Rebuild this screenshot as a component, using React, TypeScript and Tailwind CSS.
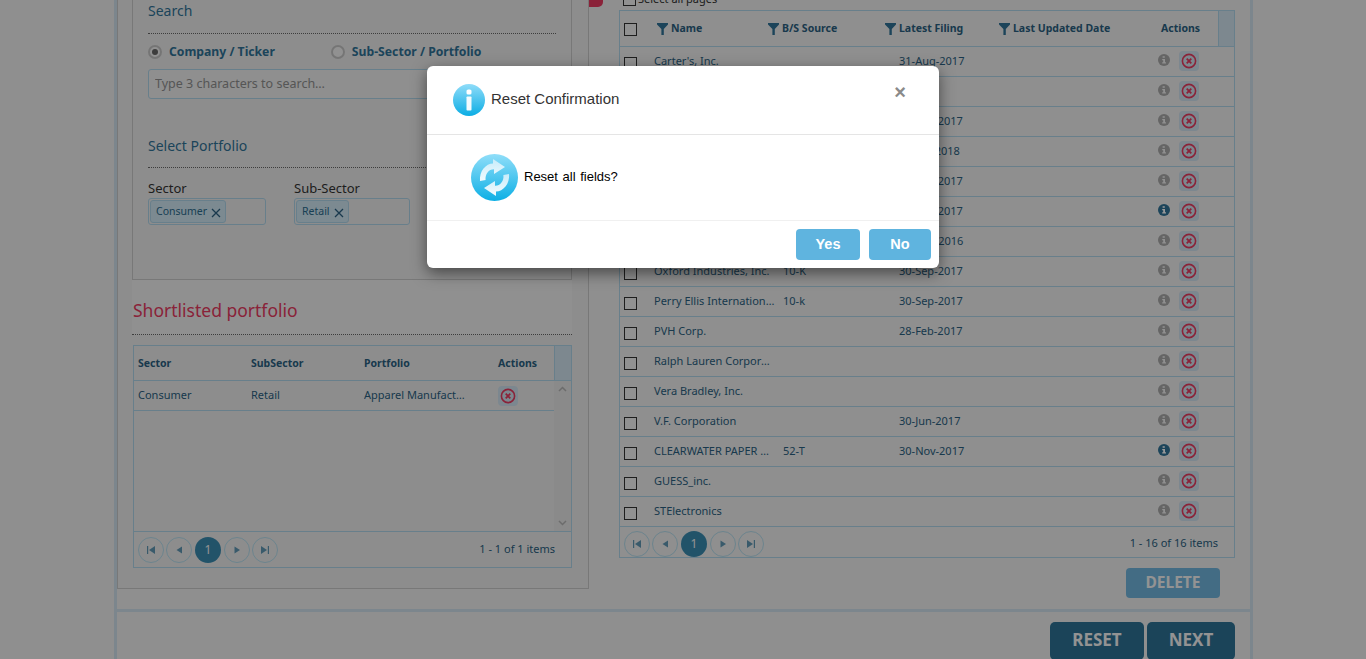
import React from "react";

const rows = [
  { name: "Carter's, Inc.", bs: "", date: "31-Aug-2017" },
  { name: "", bs: "", date: "" },
  { name: "", bs: "", date: "30-Sep-2017" },
  { name: "", bs: "", date: "31-Jan-2018" },
  { name: "", bs: "", date: "30-Sep-2017" },
  { name: "", bs: "", date: "30-Sep-2017", dark: true },
  { name: "", bs: "", date: "31-Dec-2016" },
  { name: "Oxford Industries, Inc.", bs: "10-K", date: "30-Sep-2017" },
  { name: "Perry Ellis International, Inc.", bs: "10-k", date: "30-Sep-2017" },
  { name: "PVH Corp.", bs: "", date: "28-Feb-2017" },
  { name: "Ralph Lauren Corporation", bs: "", date: "" },
  { name: "Vera Bradley, Inc.", bs: "", date: "" },
  { name: "V.F. Corporation", bs: "", date: "30-Jun-2017" },
  { name: "CLEARWATER PAPER CORP", bs: "52-T", date: "30-Nov-2017", dark: true },
  { name: "GUESS_inc.", bs: "", date: "" },
  { name: "STElectronics", bs: "", date: "" },
];

const Funnel = () => (
  <svg width="11" height="12" viewBox="0 0 11 12" className="mr-[3px] mt-[2px] shrink-0">
    <path d="M0 0h11v1.5L6.8 6v6H4.4V6L0 1.5z" fill="#2f7296" />
  </svg>
);

const Check = () => (
  <span className="block w-[13px] h-[13px] border border-[#333] bg-[#f2f2f2] shrink-0" />
);

const Info = ({ dark }: { dark?: boolean }) => (
  <svg width="12" height="12" viewBox="0 0 12 12" className="shrink-0 -mt-[2px]">
    <circle cx="6" cy="6" r="6" fill={dark ? "#2f7296" : "#a8a8a8"} />
    <path d="M4.6 2.3h2.2v1.5H4.6zM4.2 4.9h2.8v3.3h1v1.4H4.2V8.2h1V6.3h-1z" fill={dark ? "#fff" : "#f0f0f0"} />
  </svg>
);

const Remove = () => (
  <span className="flex items-center justify-center w-[20px] h-[20px] rounded-[4px] bg-[#cfe2ee] shrink-0">
    <svg width="16" height="16" viewBox="0 0 16 16">
      <circle cx="8" cy="8" r="6.6" fill="none" stroke="#e63a5f" strokeWidth="1.6" />
      <path d="M5.7 5.7l4.6 4.6M10.3 5.7l-4.6 4.6" stroke="#e63a5f" strokeWidth="1.8" />
    </svg>
  </span>
);

const Tag = ({ label }: { label: string }) => (
  <span className="flex items-center h-[23px] pt-[1px] pl-[5px] pr-[4px] gap-[4px] ml-[1px] rounded-[3px] border border-[#aed4e8] bg-[#cfe6f2] text-[10.5px] text-[#2a6a8c]">
    {label}
    <svg width="10" height="10" viewBox="0 0 10 10" className="mt-[1px]">
      <path d="M1 1l8 8M9 1l-8 8" stroke="#2a5f80" strokeWidth="1.3" />
    </svg>
  </span>
);

const Radio = ({ on, label }: { on?: boolean; label: string }) => (
  <span className="flex items-center gap-[7px]">
    <span className="flex items-center justify-center w-[14px] h-[14px] rounded-full border-2 border-[#c4c4c4] bg-[#f2f2f2]">
      {on && <span className="block w-[6px] h-[6px] rounded-full bg-[#666]" />}
    </span>
    <span className="text-[12.2px] font-bold text-[#2f7296]">{label}</span>
  </span>
);

const PagerBtn = ({ d }: { d: string }) => (
  <span className="flex items-center justify-center w-[26px] h-[26px] rounded-full border border-[#b4dcec]">
    <svg width="10" height="10" viewBox="0 0 10 10">
      <path d={d} fill="#5f97b3" />
    </svg>
  </span>
);

const Pager = ({ summary }: { summary: string }) => (
  <div className="flex items-center justify-between pl-[4px] pr-[16px]">
    <div className="flex items-center gap-[2px]">
      <PagerBtn d="M1 1h1.2v8H1zM9 1v8L3 5z" />
      <PagerBtn d="M8 1.5v7L2.5 5z" />
      <span className="flex items-center justify-center w-[26px] h-[26px] mx-[1px] rounded-full bg-[#3a8bb0] text-[12px] text-[#f5f5f5]">
        1
      </span>
      <PagerBtn d="M2.5 1.5v7L8 5z" />
      <PagerBtn d="M7.8 1H9v8H7.8zM1 1v8l6-4z" />
    </div>
    <span className="text-[11px] text-[#2a5f80]">{summary}</span>
  </div>
);

const TopIcon = () => (
  <svg width="32" height="32" viewBox="0 0 32 32" className="shrink-0">
    <defs>
      <linearGradient id="ig" x1="0" y1="0" x2="0" y2="1">
        <stop offset="0" stopColor="#8fdcf9" />
        <stop offset="1" stopColor="#0badE4" />
      </linearGradient>
    </defs>
    <circle cx="16" cy="16" r="16" fill="url(#ig)" />
    <rect x="13.5" y="5.5" width="5" height="5" rx="1.6" fill="#fff" />
    <rect x="13.5" y="12.5" width="5" height="14" rx="0.8" fill="#f3fbfe" />
  </svg>
);

const RefreshIcon = () => (
  <svg width="47" height="47" viewBox="0 0 47 47" className="shrink-0">
    <defs>
      <linearGradient id="rg" x1="0" y1="0" x2="0" y2="1">
        <stop offset="0" stopColor="#90def9" />
        <stop offset="1" stopColor="#0cafe5" />
      </linearGradient>
      <linearGradient id="ag" x1="0" y1="0" x2="0" y2="1">
        <stop offset="0" stopColor="#c8ecfa" />
        <stop offset="1" stopColor="#f2fbfe" />
      </linearGradient>
    </defs>
    <circle cx="23.5" cy="23.5" r="23.5" fill="url(#rg)" />
    <path d="M9 27C8 17 15 9.5 22 9.5V5L34 13 23 20V15.2C18 15 13.8 20 14.6 26z" fill="url(#ag)" />
    <path d="M38 20C39 30 32 37.5 25 37.5V42L13 34 24 27V31.8C29 32 33.2 27 32.4 21z" fill="url(#ag)" />
  </svg>
);

export default function App() {
  return (
    <div className="relative h-[659px] overflow-hidden bg-[#eeeeee] font-['Noto_Sans',sans-serif]">
      <div className="ml-[114px] w-[1139px] h-[659px] border-x-[3px] border-[#cfdfeb]">
        <div className="flex h-[609px]">
          {/* left panel */}
          <div className="w-[472px] h-[589px] border-x border-b border-[#c8c8c8] bg-[#ececec] pl-[15px] pr-[16px]">
            <div className="h-[280px] -ml-px border-x border-b border-[#c8c8c8] px-[15px]">
              <h2 className="h-[34px] border-b border-dotted border-[#666] text-[14px] leading-[22px] text-[#2f7296]">Search</h2>
              <div className="flex gap-[56px] mt-[8px] h-[20px] items-center">
                <Radio on label="Company / Ticker" />
                <Radio label="Sub-Sector / Portfolio" />
              </div>
              <input
                readOnly
                placeholder="Type 3 characters to search…"
                className="block w-full h-[30px] mt-[7px] pl-[6px] pb-[2px] rounded-[3px] border border-[#aed4e8] bg-[#eeeeee] text-[12.5px] placeholder:text-[#8f8f8f]"
              />
              <h2 className="h-[34px] mt-[35px] border-b border-dotted border-[#666] text-[14px] leading-[24px] text-[#2f7296]">Select Portfolio</h2>
              <div className="flex gap-[28px] mt-[12px]">
                <div>
                  <div className="h-[18px] text-[13px] leading-[17px] text-[#333]">Sector</div>
                  <div className="flex items-center w-[118px] h-[27px] rounded-[3px] border border-[#aed4e8]">
                    <Tag label="Consumer" />
                  </div>
                </div>
                <div>
                  <div className="h-[18px] text-[13px] leading-[17px] text-[#333]">Sub-Sector</div>
                  <div className="flex items-center w-[116px] h-[27px] rounded-[3px] border border-[#aed4e8]">
                    <Tag label="Retail" />
                  </div>
                </div>
              </div>
            </div>
            <div className="h-[55px] -ml-px pl-[1px] pt-[18px] border-b border-dotted border-[#666] bg-[#f0f0f0]">
              <h2 className="text-[17.5px] leading-[24px] text-[#e63a5f]">Shortlisted portfolio</h2>
            </div>
            {/* shortlisted table */}
            <div className="flex flex-col h-[223px] mt-[10px] border border-[#aed4e8] text-[11px] text-[#2a5f80]">
              <div className="flex h-[35px] items-center border-b border-[#aed4e8] font-bold text-[10.5px]">
                <div className="grid grid-cols-[113px_113px_134px_56px] flex-1 items-center pl-[4px] pt-[1px]">
                  <span>Sector</span>
                  <span>SubSector</span>
                  <span>Portfolio</span>
                  <span>Actions</span>
                </div>
                <div className="w-[17px] h-full border-l border-[#aed4e8] bg-[#d0e3ef]" />
              </div>
              <div className="flex flex-1">
                <div className="flex-1">
                  <div className="grid grid-cols-[113px_113px_134px_56px] h-[30px] items-center pl-[4px] border-b border-[#aed4e8]">
                    <span>Consumer</span>
                    <span>Retail</span>
                    <span className="truncate pr-[30px]">Apparel Manufacturers</span>
                    <Remove />
                  </div>
                </div>
                <div className="flex flex-col justify-between items-center w-[17px] py-[5px] bg-[#e6e6e6]">
                  <svg width="9" height="6" viewBox="0 0 9 6"><path d="M1 5l3.5-3.5L8 5" fill="none" stroke="#b4b4b4" strokeWidth="1.5" /></svg>
                  <svg width="9" height="6" viewBox="0 0 9 6"><path d="M1 1l3.5 3.5L8 1" fill="none" stroke="#b4b4b4" strokeWidth="1.5" /></svg>
                </div>
              </div>
              <div className="flex flex-col justify-center h-[36px] border-t border-[#aed4e8]">
                <Pager summary="1 - 1 of 1 items" />
              </div>
            </div>
          </div>

          {/* right panel */}
          <div className="relative w-[616px] ml-[30px]">
            <span className="absolute -left-[30px] top-0 w-[14px] h-[7px] rounded-br-[5px] bg-[#e63a5f]" />
            <div className="flex items-center gap-[2px] -mt-[12px] h-[22px] pl-[4px] text-[11px] text-[#333]">
              <Check />
              Select all pages
            </div>
            <div className="border border-[#aed4e8] text-[11px] text-[#2a5f80]">
              <div className="flex h-[36px] border-b border-[#aed4e8] font-bold text-[10.5px]">
                <div className="grid grid-cols-[29px_119px_117px_114px_162px_57px] flex-1 items-center pt-[1px]">
                  <span className="pl-[4px]"><Check /></span>
                  <span className="flex pl-[8px]"><Funnel />Name</span>
                  <span className="flex"><Funnel />B/S Source</span>
                  <span className="flex"><Funnel />Latest Filing</span>
                  <span className="flex"><Funnel />Last Updated Date</span>
                  <span>Actions</span>
                </div>
                <div className="w-[17px] h-full border-l border-[#aed4e8] bg-[#d0e3ef]" />
              </div>
              {rows.map((r, i) => (
                <div key={i} className="grid grid-cols-[29px_129px_116px_264px_78px] h-[30px] items-center border-b border-[#aed4e8] text-[11px]">
                  <span className="pl-[4px] pt-[3px]"><Check /></span>
                  <span className="truncate pl-[5px] pr-[3px]">{r.name}</span>
                  <span className="pl-[5px]">{r.bs}</span>
                  <span className="pl-[5px]">{r.date}</span>
                  <span className="flex items-center gap-[9px] -mt-[1px]">
                    <Info dark={r.dark} />
                    <Remove />
                  </span>
                </div>
              ))}
              <div className="flex flex-col justify-center h-[30px] pt-[3px]">
                <Pager summary="1 - 16 of 16 items" />
              </div>
            </div>
            <div className="flex justify-end mt-[10px] pr-[15px]">
              <button className="w-[94px] h-[30px] rounded-[4px] bg-[#70b4dc] text-[15.5px] font-bold text-[#f5f5f5]">DELETE</button>
            </div>
          </div>
        </div>
        {/* bottom bar */}
        <div className="flex justify-end gap-[3px] pt-[10px] pr-[15px] border-t-[3px] border-[#cfdfeb]">
          <button className="w-[94px] h-[38px] pb-[2px] rounded-[5px] bg-[#2d7295] text-[17px] font-bold text-[#f5f5f5]">RESET</button>
          <button className="w-[88px] h-[38px] pb-[2px] rounded-[5px] bg-[#2d7295] text-[17px] font-bold text-[#f5f5f5]">NEXT</button>
        </div>
      </div>

      {/* modal */}
      <div className="absolute inset-0 bg-black/40" />
      <div className="absolute left-[427px] top-[66px] w-[512px] h-[202px] rounded-[6px] bg-white shadow-[0_5px_15px_rgba(0,0,0,0.5)] font-['Liberation_Sans',sans-serif]">
        <div className="flex items-center gap-[6px] h-[69px] pl-[26px] pr-[33px] border-b border-[#e5e5e5]">
          <TopIcon />
          <span className="flex-1 -mt-[2px] text-[15px] text-[#333]">Reset Confirmation</span>
          <span className="-mt-[17px] text-[20px] font-bold leading-none text-[#8a8a8a]">×</span>
        </div>
        <div className="flex items-center gap-[6px] h-[86px] pl-[44px] border-b border-[#f0f0f0]">
          <RefreshIcon />
          <span className="text-[13px] text-[#000] [word-spacing:1px] -mt-[1px]">Reset all fields?</span>
        </div>
        <div className="flex justify-end gap-[9px] pt-[8px] pr-[8px]">
          <button className="w-[64px] h-[31px] rounded-[4px] bg-[#5fb4df] text-[14.5px] font-bold text-white">Yes</button>
          <button className="w-[62px] h-[31px] rounded-[4px] bg-[#5fb4df] text-[14.5px] font-bold text-white">No</button>
        </div>
      </div>
    </div>
  );
}
